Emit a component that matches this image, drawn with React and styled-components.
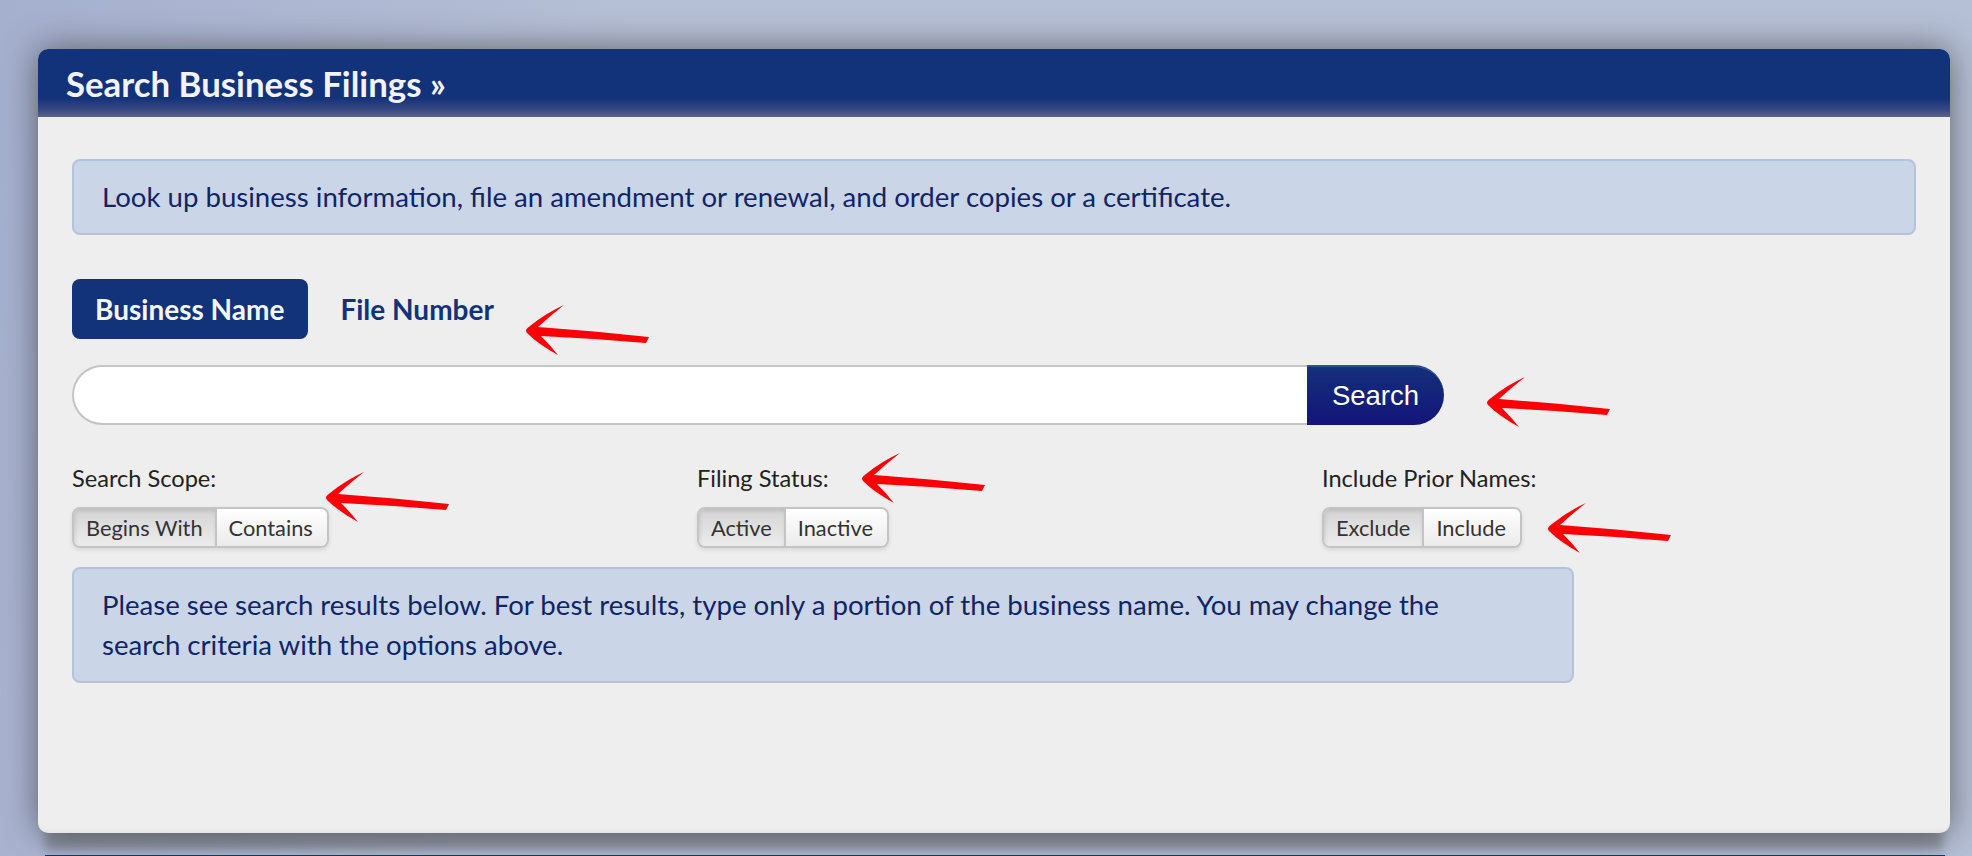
import React from "react";
import styled, { createGlobalStyle } from "styled-components";

const GlobalStyle = createGlobalStyle`
  html, body {
    margin: 0;
    padding: 0;
  }
  body {
    font-family: "Lato", "Liberation Sans", sans-serif;
    background: linear-gradient(100deg, #a5b0cf 0%, #b5bfd5 30%, #b5bfd5 100%);
  }
`;

const Page = styled.div`
  position: relative;
  width: 1972px;
  height: 856px;
  overflow: hidden;
  box-sizing: border-box;
  padding: 49px 22px 0 38px;
`;

const Panel = styled.section`
  height: 784px;
  background: #eeeeee;
  border-radius: 10px;
  box-shadow: 0 0 34px rgba(55, 55, 55, 0.68), 0 24px 8px -7px rgba(80, 80, 80, 0.38),
    inset 0 -7px 7px -7px rgba(0, 0, 0, 0.08);
  overflow: hidden;
`;

const PanelHeader = styled.header`
  height: 68px;
  box-sizing: border-box;
  padding: 0 28px;
  display: flex;
  align-items: center;
  background: linear-gradient(#12327a 0%, #12327a 72%, #3a4a80 90%, #5c6488 100%);
  color: #f2f4fa;
  font-size: 34.8px;
  font-weight: 700;
`;

const PanelBody = styled.div`
  padding: 42px 34px 0 34px;
`;

const Notice = styled.div`
  box-sizing: border-box;
  width: ${(p) => p.$width || "100%"};
  padding: 0 28px;
  min-height: 76px;
  display: flex;
  align-items: center;
  background: #cbd5e8;
  border: 2px solid #b4c3dc;
  border-radius: 8px;
  color: #0f2566;
  font-size: 27.6px;
  line-height: 40px;
`;

const Tabs = styled.div`
  display: flex;
  align-items: center;
  gap: 32px;
  margin-top: 44px;
`;

const Tab = styled.a`
  height: 60px;
  padding: 0 24px 0 23px;
  display: flex;
  align-items: center;
  border-radius: 8px;
  font-size: 28px;
  font-weight: 700;
  color: ${(p) => (p.$active ? "#f6f7fb" : "#12327a")};
  background: ${(p) => (p.$active ? "#12327a" : "transparent")};
  &:last-child {
    padding: 0;
  }
`;

const SearchRow = styled.div`
  display: flex;
  height: 60px;
  width: 1372px;
  margin-top: 26px;
`;

const SearchInput = styled.input`
  flex: 1;
  min-width: 0;
  box-sizing: border-box;
  height: 60px;
  border: 2px solid #c4c4c4;
  border-right: 0;
  border-radius: 30px 0 0 30px;
  background: #ffffff;
  outline: none;
`;

const SearchButton = styled.button`
  width: 137px;
  height: 60px;
  border: 0;
  border-top: 2px solid #31508f;
  border-radius: 0 30px 30px 0;
  background: linear-gradient(#13307a, #14147a);
  color: #ffffff;
  font-family: "Liberation Sans", Arial, sans-serif;
  font-size: 27.5px;
`;

const Options = styled.div`
  display: grid;
  grid-template-columns: repeat(3, 625px);
  margin-top: 39px;
`;

const Option = styled.div`
  display: flex;
  flex-direction: column;
  align-items: flex-start;
  gap: 15px;
`;

const OptionLabel = styled.div`
  font-size: 23.6px;
  line-height: 28px;
  color: #222222;
`;

const Toggle = styled.div`
  display: flex;
  height: 41px;
  box-sizing: border-box;
  border: 2px solid #c4c4c4;
  border-radius: 8px;
  box-shadow: 0 2px 4px rgba(0, 0, 0, 0.1);
  overflow: hidden;
`;

const ToggleOption = styled.span`
  display: flex;
  align-items: center;
  padding: ${(p) => (p.$on ? "0 12px" : "0 14px 0 12px")};
  font-size: 21.8px;
  color: #333333;
  background: ${(p) => (p.$on ? "linear-gradient(#d4d4d4, #ececec)" : "linear-gradient(#ffffff, #ebebeb)")};
  box-shadow: ${(p) => (p.$on ? "inset 1px 2px 4px rgba(0, 0, 0, 0.12)" : "none")};
  & + & {
    border-left: 2px solid #c4c4c4;
  }
`;

const ResultNotice = styled(Notice)`
  margin-top: 19px;
  min-height: 116px;
`;

const FooterLine = styled.div`
  position: relative;
  height: 1px;
  margin: 22px 5px 0 7px;
  background: #12327a;
`;

const ArrowMark = styled.svg`
  position: absolute;
  left: ${(p) => p.$x}px;
  top: ${(p) => p.$y}px;
  width: 124px;
  height: 52px;
  fill: #fb0007;
`;

const Arrow = ({ x, y }) => (
  <ArrowMark $x={x} $y={y} viewBox="0 0 124 52">
    <path d="M0 25 Q1 23 4 21 Q20 8 38 0 Q24 11 12 22 L68 26.5 L123 32 L120 38 L68 34 L15 31 Q25 41 32 50 Q12 39 1 28 Q0 27 0 25 Z" />
  </ArrowMark>
);

const options = [
  { label: "Search Scope:", on: "Begins With", off: "Contains" },
  { label: "Filing Status:", on: "Active", off: "Inactive" },
  { label: "Include Prior Names:", on: "Exclude", off: "Include" },
];

const arrows = [
  [526, 305],
  [1487, 377],
  [326, 472],
  [862, 453],
  [1548, 503],
];

export default function App() {
  return (
    <Page>
      <GlobalStyle />
      <Panel>
        <PanelHeader>Search Business Filings »</PanelHeader>
        <PanelBody>
          <Notice>Look up business information, file an amendment or renewal, and order copies or a certificate.</Notice>
          <Tabs>
            <Tab $active>Business Name</Tab>
            <Tab>File Number</Tab>
          </Tabs>
          <SearchRow>
            <SearchInput type="text" />
            <SearchButton>Search</SearchButton>
          </SearchRow>
          <Options>
            {options.map((o) => (
              <Option key={o.label}>
                <OptionLabel>{o.label}</OptionLabel>
                <Toggle>
                  <ToggleOption $on>{o.on}</ToggleOption>
                  <ToggleOption>{o.off}</ToggleOption>
                </Toggle>
              </Option>
            ))}
          </Options>
          <ResultNotice $width="1502px">
            <span>
              Please see search results below. For best results, type only a portion of the business name. You may change the
              <br />
              search criteria with the options above.
            </span>
          </ResultNotice>
        </PanelBody>
      </Panel>
      <FooterLine />
      {arrows.map(([x, y]) => (
        <Arrow key={x} x={x} y={y} />
      ))}
    </Page>
  );
}
